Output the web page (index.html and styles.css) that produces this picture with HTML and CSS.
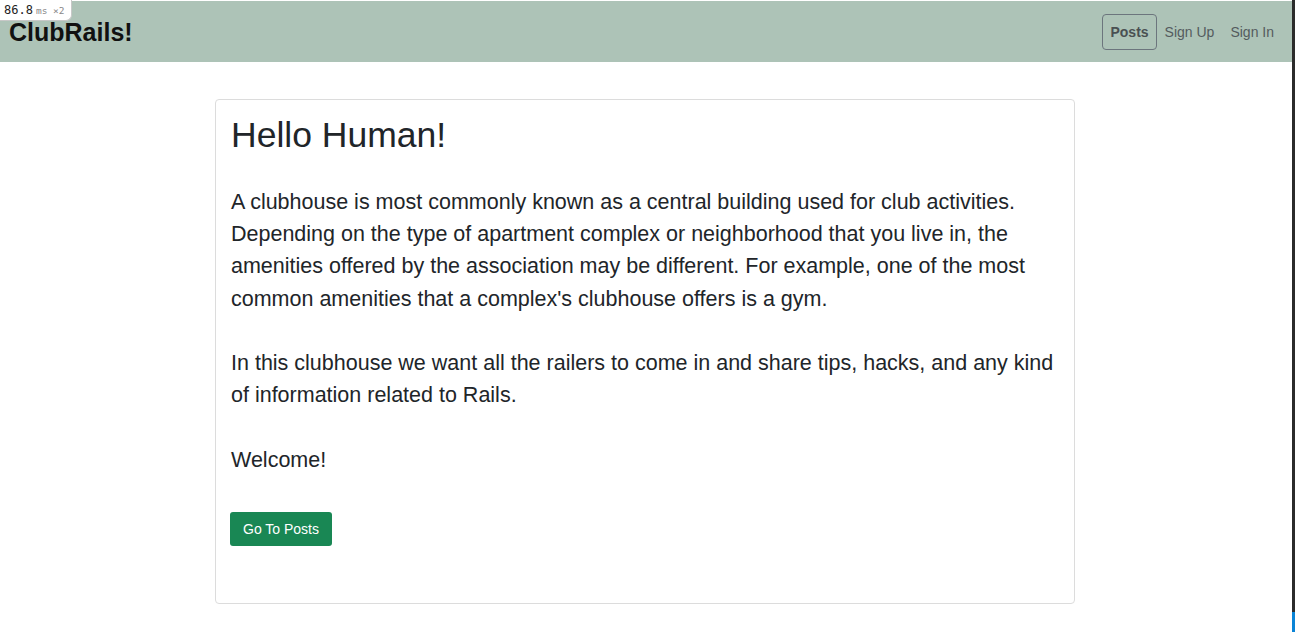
FILE: index.html
```html
<!DOCTYPE html>
<html lang="en">
<head>
<meta charset="utf-8">
<title>ClubRails!</title>
<link rel="stylesheet" href="styles.css">
</head>
<body>
<div class="timer"><span class="timer-num">86.8</span><span class="timer-unit">ms ×2</span></div>
<nav class="navbar">
  <a class="brand" href="#">ClubRails!</a>
  <ul class="nav">
    <li><a class="nav-link active" href="#">Posts</a></li>
    <li><a class="nav-link" href="#">Sign Up</a></li>
    <li><a class="nav-link" href="#">Sign In</a></li>
  </ul>
</nav>
<main class="main">
  <section class="card">
    <h1 class="title">Hello Human!</h1>
    <p class="lead">A clubhouse is most commonly known as a central building used for club activities. Depending on the type of apartment complex or neighborhood that you live in, the amenities offered by the association may be different. For example, one of the most common amenities that a complex's clubhouse offers is a gym.<br><br>In this clubhouse we want all the railers to come in and share tips, hacks, and any kind of information related to Rails.<br><br>Welcome!</p>
    <a class="btn" href="#">Go To Posts</a>
  </section>
</main>
<div class="scrollbar"><div class="scrollbar-thumb"></div></div>
</body>
</html>
```
FILE: styles.css
```css
* { box-sizing: border-box; }
html, body { margin: 0; padding: 0; }
body {
  font-family: "Liberation Sans", Arial, sans-serif;
  color: #212529;
  background: #fff;
  width: 1292px;
  height: 632px;
  overflow: hidden;
}
.navbar {
  margin-top: 1px;
  height: 61px;
  background: #adc3b7;
  display: flex;
  align-items: center;
  justify-content: space-between;
  padding: 0 10px 0 9px;
}
.brand {
  font-size: 25px;
  font-weight: 700;
  color: #111;
  text-decoration: none;
  line-height: 1;
  margin-top: 1px;
}
.nav {
  list-style: none;
  margin: 0;
  padding: 0;
  display: flex;
  align-items: center;
}
.nav-link {
  display: block;
  font-size: 14px;
  line-height: 20px;
  padding: 7px 7px;
  color: #545b5e;
  text-decoration: none;
  border: 1px solid transparent;
  border-radius: 4px;
}
.nav-link.active {
  font-weight: 700;
  border-color: #6c757d;
  color: #4a5052;
}
.main {
  padding: 37px 2px 0 0;
  display: flex;
  justify-content: center;
}
.card {
  width: 860px;
  height: 505px;
  border: 1px solid #dcdcdc;
  border-radius: 4px;
  padding: 14px 15px;
}
.title {
  font-size: 35.5px;
  font-weight: 400;
  line-height: 43px;
  margin: 0 0 29px;
}
.lead {
  font-size: 21.5px;
  line-height: 32.2px;
  margin: 0 0 36px;
}
.btn {
  display: inline-block;
  margin-left: -1px;
  font-size: 14px;
  line-height: 20px;
  padding: 7px 13px;
  color: #fff;
  background: #198754;
  border-radius: 3px;
  text-decoration: none;
}
.timer {
  position: fixed;
  top: 0;
  left: 0;
  height: 21px;
  padding: 0 6px 0 4px;
  background: #fff;
  border: 1px solid #c8c8c8;
  border-top: none;
  border-left: none;
  border-bottom-right-radius: 6px;
  display: flex;
  align-items: center;
  gap: 3px;
  z-index: 10;
}
.timer-num {
  font-family: "DejaVu Sans Mono", monospace;
  font-size: 12px;
  color: #222;
}
.timer-unit {
  font-family: "DejaVu Sans Mono", monospace;
  font-size: 9.5px;
  color: #888;
}
.scrollbar {
  position: fixed;
  top: 0;
  right: 0;
  width: 3px;
  height: 632px;
  background: #2b2b2b;
  display: flex;
  flex-direction: column;
  justify-content: flex-end;
}
.scrollbar-thumb {
  height: 20px;
  background: #0a84d6;
}
```
